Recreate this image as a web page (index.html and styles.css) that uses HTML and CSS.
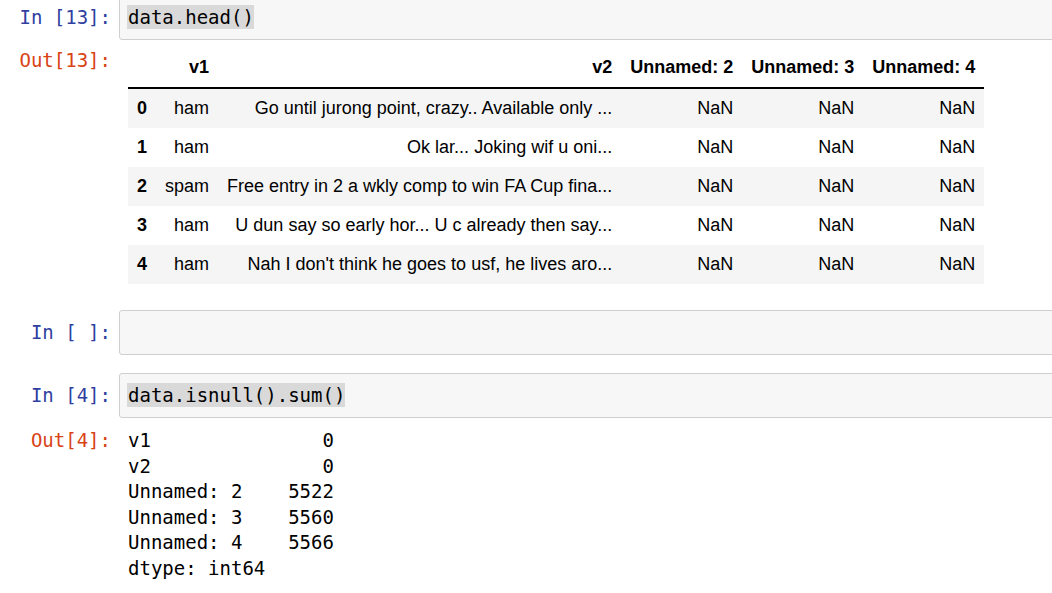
FILE: index.html
```html
<!DOCTYPE html>
<html>
<head>
<meta charset="utf-8">
<link rel="stylesheet" href="styles.css">
</head>
<body>
<div class="notebook">
  <div class="cell">
    <div class="row">
      <div class="prompt in">In&nbsp;[13]:</div>
      <div class="input"><span class="sel">data.head()</span></div>
    </div>
    <div class="row out-row">
      <div class="prompt out">Out[13]:</div>
      <div class="output">
        <table class="df">
          <thead>
            <tr><th></th><th>v1</th><th>v2</th><th>Unnamed: 2</th><th>Unnamed: 3</th><th>Unnamed: 4</th></tr>
          </thead>
          <tbody>
            <tr><th>0</th><td>ham</td><td>Go until jurong point, crazy.. Available only ...</td><td>NaN</td><td>NaN</td><td>NaN</td></tr>
            <tr><th>1</th><td>ham</td><td>Ok lar... Joking wif u oni...</td><td>NaN</td><td>NaN</td><td>NaN</td></tr>
            <tr><th>2</th><td>spam</td><td>Free entry in 2 a wkly comp to win FA Cup fina...</td><td>NaN</td><td>NaN</td><td>NaN</td></tr>
            <tr><th>3</th><td>ham</td><td>U dun say so early hor... U c already then say...</td><td>NaN</td><td>NaN</td><td>NaN</td></tr>
            <tr><th>4</th><td>ham</td><td>Nah I don't think he goes to usf, he lives aro...</td><td>NaN</td><td>NaN</td><td>NaN</td></tr>
          </tbody>
        </table>
      </div>
    </div>
  </div>

  <div class="cell">
    <div class="row">
      <div class="prompt in">In&nbsp;[&nbsp;]:</div>
      <div class="input"><span class="empty"></span></div>
    </div>
  </div>

  <div class="cell">
    <div class="row">
      <div class="prompt in">In&nbsp;[4]:</div>
      <div class="input"><span class="sel">data.isnull().sum()</span></div>
    </div>
    <div class="row out-row text-out">
      <div class="prompt out">Out[4]:</div>
      <div class="output"><pre class="plain">v1               0
v2               0
Unnamed: 2    5522
Unnamed: 3    5560
Unnamed: 4    5566
dtype: int64</pre></div>
    </div>
  </div>
</div>
</body>
</html>
```
FILE: styles.css
```css
html, body {
  margin: 0;
  padding: 0;
  background: #fff;
  overflow: hidden;
}

.notebook {
  width: 1070px;
  margin-top: -5px;
  font-family: "DejaVu Sans Mono", "Liberation Mono", monospace;
  font-size: 19px;
}

.cell + .cell {
  margin-top: 18px;
}

.row {
  display: flex;
  align-items: flex-start;
}

.prompt {
  flex: 0 0 119px;
  box-sizing: border-box;
  padding-right: 8px;
  text-align: right;
  line-height: 25px;
  padding-top: 10px;
  white-space: nowrap;
}

.prompt.in {
  color: #303f9f;
}

.prompt.out {
  color: #d84315;
  padding-top: 0;
}

.input {
  flex: 1;
  background: #f7f7f7;
  border: 1px solid #cfcfcf;
  border-radius: 3px;
  padding: 9px 8px 9px 8px;
  line-height: 25px;
  height: 25px;
  color: #000;
}

.sel {
  display: inline-block;
  background: #d9d9d9;
  line-height: 24px;
  height: 24px;
  padding-left: 1px;
  margin-left: -1px;
  vertical-align: top;
}

.out-row {
  margin-top: 8px;
  padding-bottom: 8px;
}

.text-out {
  margin-top: 10px;
}

.output {
  flex: 1;
  padding-left: 9px;
}

.df {
  border-collapse: collapse;
  border-spacing: 0;
  font-family: "Liberation Sans", Arial, sans-serif;
  font-size: 18px;
  color: #000;
}

.df th, .df td {
  padding: 9px 9px;
  line-height: 21px;
  text-align: right;
  white-space: nowrap;
  vertical-align: middle;
}

.df th {
  font-weight: bold;
}

.df thead th {
  border-bottom: 2px solid #000;
}

.df tbody tr:nth-child(odd) {
  background: #f5f5f5;
}

.plain {
  margin: 0;
  font-family: "DejaVu Sans Mono", "Liberation Mono", monospace;
  font-size: 19px;
  line-height: 25.5px;
  color: #000;
}
```
